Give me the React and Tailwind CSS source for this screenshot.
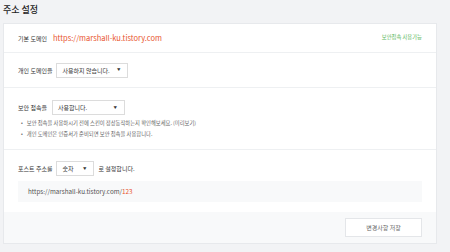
import React from 'react'

const font = { fontFamily: '"Noto Sans CJK KR", "Noto Sans", sans-serif' }

// Small select box with a filled caret on the right
const Select = ({ label, width }) => (
  <div className={`${width} h-[15px] flex items-center justify-between border border-[#dcdcdc] bg-white pl-[5px] pr-[7px] text-[6px] text-[#333]`}>
    <span>{label}</span>
    <span className="text-[3.5px] text-[#333] leading-none">▼</span>
  </div>
)

const App = () => {
  return (
    <div className="w-[450px] h-[252px] bg-[#f2f3f5] pl-[3px] pr-[13px] overflow-hidden" style={font}>
      <div className="h-[23px] flex items-center pb-[3px] text-[9px] font-medium text-[#222]">주소 설정</div>

      <div className="bg-white border border-[#e7e9ec]">
        {/* 기본 도메인 */}
        <div className="h-[29px] flex items-center justify-between px-[14px] border-b border-[#eef0f2]">
          <div className="flex items-center gap-[6px]">
            <span className="text-[6px] text-[#333]">기본 도메인</span>
            <span className="text-[7.5px] text-[#e8542e]">https://marshall-ku.tistory.com</span>
          </div>
          <span className="text-[5.3px] text-[#5cb85c]">보안접속 사용가능</span>
        </div>

        {/* 개인 도메인 */}
        <div className="h-[35px] flex items-center gap-[4px] px-[14px] border-b border-[#eef0f2]">
          <span className="text-[6px] text-[#333]">개인 도메인을</span>
          <Select label="사용하지 않습니다." width="w-[72px]" />
        </div>

        {/* 보안 접속 */}
        <div className="h-[62px] flex flex-col px-[14px] pt-[12px] border-b border-[#eef0f2]">
          <div className="flex items-center gap-[5px]">
            <span className="text-[6px] text-[#333]">보안 접속을</span>
            <Select label="사용합니다." width="w-[73px]" />
          </div>
          <ul className="mt-[3px] pl-[3px] text-[5.3px] text-[#666] leading-[11px]">
            <li className="flex gap-[4px]"><span>•</span><span>보안 접속을 사용하시기 전에 스킨이 정상동작하는지 확인해보세요. (미리보기)</span></li>
            <li className="flex gap-[4px]"><span>•</span><span>개인 도메인은 인증서가 준비되면 보안 접속을 사용합니다.</span></li>
          </ul>
        </div>

        {/* 포스트 주소 */}
        <div className="h-[62px] flex flex-col px-[14px] pt-[11px]">
          <div className="flex items-center gap-[4px] text-[6px] text-[#333]">
            <span>포스트 주소를</span>
            <Select label="숫자" width="w-[38px]" />
            <span>로 설정합니다.</span>
          </div>
          <div className="mt-[5px] h-[21px] flex items-center bg-[#f8f9fa] pl-[10px] text-[6.3px] text-[#555]">
            <span>https://marshall-ku.tistory.com/<span className="text-[#e8542e]">123</span></span>
          </div>
        </div>

        {/* footer */}
        <div className="h-[31px] flex items-center justify-end px-[14px] bg-[#f8f9fa]">
          <button className="w-[77px] h-[19px] bg-white border border-[#e4e6e9] text-[6px] text-[#666]">변경사항 저장</button>
        </div>
      </div>
    </div>
  )
}

export default App
